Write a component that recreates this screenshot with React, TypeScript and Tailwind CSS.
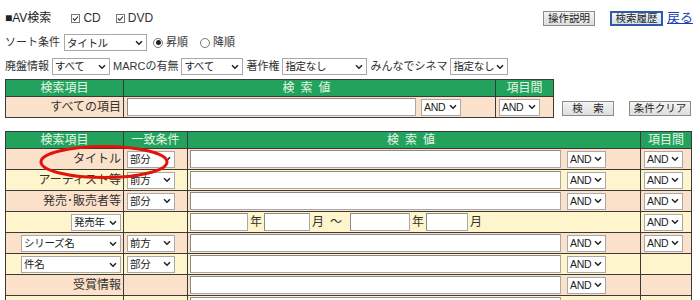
import React from "react";

const Chevron = () => (
  <svg width="8" height="6" viewBox="0 0 8 6" className="shrink-0">
    <path d="M1 1.2 L4 4.2 L7 1.2" fill="none" stroke="#222" strokeWidth="1.5" />
  </svg>
);

const Sel = ({ label, w }: { label: string; w: string }) => (
  <span
    className={`inline-flex items-center justify-between h-[17px] bg-white border border-[#a8a8a8] pl-[2px] pr-[3px] text-[10.5px] leading-none text-[#222] whitespace-nowrap overflow-hidden align-middle ${w}`}
  >
    <span className="tracking-[-0.3px]">{label}</span>
    <Chevron />
  </span>
);

const Input = ({ w }: { w: string }) => (
  <span
    className={`inline-block h-[18px] bg-white border border-[#a8a8a8] border-t-[#8a8a8a] border-l-[#8a8a8a] align-middle ${w}`}
  />
);

const Btn = ({ label, w, active }: { label: string; w: string; active?: boolean }) => (
  <span
    className={`inline-flex items-center justify-center h-[15px] text-[10.5px] leading-none text-[#222] whitespace-nowrap ${w} ${
      active
        ? "border-2 border-[#2f5aa8] bg-gradient-to-b from-[#f4f7fc] to-[#d6e0f0]"
        : "border border-[#8c8c8c] bg-gradient-to-b from-[#f4f4f4] to-[#dedede]"
    }`}
  >
    {label}
  </span>
);

const Check = () => (
  <span className="inline-flex items-center justify-center w-[9px] h-[9px] border border-[#777] bg-white mr-[3px]">
    <svg width="7" height="7" viewBox="0 0 7 7">
      <path d="M1 3.5 L2.8 5.3 L6 1.5" fill="none" stroke="#222" strokeWidth="1.1" />
    </svg>
  </span>
);

const Radio = ({ on }: { on?: boolean }) => (
  <span className="inline-flex items-center justify-center w-[10px] h-[10px] rounded-full border border-[#777] bg-white mr-[3px]">
    {on && <span className="w-[5px] h-[5px] rounded-full bg-[#222]" />}
  </span>
);

type Row = {
  bg: string;
  item: React.ReactNode;
  match?: string;
  value: "text" | "date";
  op?: boolean;
  between?: boolean;
};

const PEACH = "bg-[#fbe1c9]";
const YELLOW = "bg-[#fff5cd]";

const rows: Row[] = [
  { bg: PEACH, item: "タイトル", match: "部分", value: "text", op: true, between: true },
  { bg: YELLOW, item: "アーティスト等", match: "前方", value: "text", op: true, between: true },
  { bg: PEACH, item: "発売･販売者等", match: "部分", value: "text", op: true, between: true },
  { bg: YELLOW, item: <Sel label="発売年" w="w-[50px]" />, value: "date", between: true },
  { bg: PEACH, item: <Sel label="シリーズ名" w="w-[100px]" />, match: "前方", value: "text", op: true, between: true },
  { bg: YELLOW, item: <Sel label="件名" w="w-[100px]" />, match: "部分", value: "text", op: true },
  { bg: PEACH, item: "受賞情報", value: "text", op: true },
  { bg: YELLOW, item: "", value: "text" },
];

const td = "border border-[#3a3a3a] p-0";
const th = "border border-[#3a3a3a] bg-[#22a25c] text-[#e6f6e6] font-normal text-[12px] h-[17px] leading-none";

export default function App() {
  return (
    <div className="relative w-[700px] h-[300px] overflow-hidden bg-white text-[11px] text-[#333] font-['Liberation_Sans','Noto_Sans_CJK_JP',sans-serif]">
      <div className="flex items-center h-[20px] mt-[8px] pl-[5px]">
        <span className="text-[12px] text-[#222]">■AV検索</span>
        <span className="flex items-center ml-[20px] text-[12px]">
          <Check />
          CD
        </span>
        <span className="flex items-center ml-[15px] text-[12px]">
          <Check />
          DVD
        </span>
        <span className="ml-auto flex items-center">
          <Btn label="操作説明" w="w-[52px]" />
          <span className="w-[15px]" />
          <Btn label="検索履歴" w="w-[53px]" active />
          <span className="ml-[4px] text-[13px] text-[#1a3fb0] underline">戻る</span>
          <span className="w-[7px]" />
        </span>
      </div>

      <div className="flex items-center h-[17px] mt-[6px] pl-[5px]">
        <span>ソート条件</span>
        <span className="ml-[4px]">
          <Sel label="タイトル" w="w-[83px]" />
        </span>
        <span className="flex items-center ml-[6px]">
          <Radio on />
          昇順
        </span>
        <span className="flex items-center ml-[12px]">
          <Radio />
          降順
        </span>
      </div>

      <div className="flex items-center h-[17px] mt-[7px] pl-[5px] gap-[3px]">
        <span>廃盤情報</span>
        <Sel label="すべて" w="w-[58px]" />
        <span>MARCの有無</span>
        <Sel label="すべて" w="w-[62px]" />
        <span>著作権</span>
        <Sel label="指定なし" w="w-[85px]" />
        <span>みんなでシネマ</span>
        <Sel label="指定なし" w="w-[58px]" />
      </div>

      <div className="flex items-end mt-[4px] ml-[5px]">
        <table className="border-collapse w-[548px] table-fixed">
          <colgroup>
            <col className="w-[118px]" />
            <col className="w-[372px]" />
            <col className="w-[58px]" />
          </colgroup>
          <thead>
            <tr>
              <th className={th}>検索項目</th>
              <th className={th + " tracking-[6px]"}>検索値</th>
              <th className={th}>項目間</th>
            </tr>
          </thead>
          <tbody>
            <tr className={`${PEACH} h-[21px]`}>
              <td className={td + " text-right pr-[2px] text-[12px]"}>すべての項目</td>
              <td className={td + " pl-[3px]"}>
                <div className="flex items-center">
                  <Input w="w-[289px]" />
                  <span className="ml-[5px]">
                    <Sel label="AND" w="w-[40px]" />
                  </span>
                </div>
              </td>
              <td className={td + " pl-[3px]"}>
                <Sel label="AND" w="w-[41px]" />
              </td>
            </tr>
          </tbody>
        </table>
        <div className="flex items-center mb-[2px] ml-[8px]">
          <Btn label="検　索" w="w-[52px]" />
          <span className="w-[15px]" />
          <Btn label="条件クリア" w="w-[62px]" />
        </div>
      </div>

      <table className="border-collapse w-[686px] table-fixed mt-[13px] ml-[5px]">
        <colgroup>
          <col className="w-[118px]" />
          <col className="w-[64px]" />
          <col className="w-[453px]" />
          <col className="w-[51px]" />
        </colgroup>
        <thead>
          <tr>
            <th className={th}>検索項目</th>
            <th className={th}>一致条件</th>
            <th className={th + " tracking-[6px]"}>検索値</th>
            <th className={th}>項目間</th>
          </tr>
        </thead>
        <tbody>
          {rows.map((r, i) => (
            <tr key={i} className={`${r.bg} h-[21px]`}>
              <td className={td + " text-right pr-[2px] text-[12px]"}>{r.item}</td>
              <td className={td + " pl-[3px]"}>{r.match && <Sel label={r.match} w="w-[48px]" />}</td>
              <td className={td + " pl-[2px]"}>
                {r.value === "text" && (
                  <div className="flex items-center">
                    <Input w="w-[371px]" />
                    {r.op && (
                      <span className="ml-[6px]">
                        <Sel label="AND" w="w-[39px]" />
                      </span>
                    )}
                  </div>
                )}
                {r.value === "date" && (
                  <div className="flex items-center">
                    <Input w="w-[58px]" />
                    <span className="mx-[2px] text-[12px]">年</span>
                    <Input w="w-[46px]" />
                    <span className="ml-[2px] text-[12px]">月</span>
                    <span className="ml-[6px] mr-[8px] text-[12px]">～</span>
                    <Input w="w-[60px]" />
                    <span className="mx-[2px] text-[12px]">年</span>
                    <Input w="w-[42px]" />
                    <span className="ml-[2px] text-[12px]">月</span>
                  </div>
                )}
              </td>
              <td className={td + " pl-[3px]"}>{r.between && <Sel label="AND" w="w-[39px]" />}</td>
            </tr>
          ))}
        </tbody>
      </table>

      <svg
        className="absolute left-[38px] top-[144px] pointer-events-none"
        width="132"
        height="36"
        viewBox="0 0 132 36"
      >
        <ellipse cx="66" cy="18" rx="63" ry="15.5" fill="none" stroke="#e3120b" strokeWidth="3" />
      </svg>
    </div>
  );
}
